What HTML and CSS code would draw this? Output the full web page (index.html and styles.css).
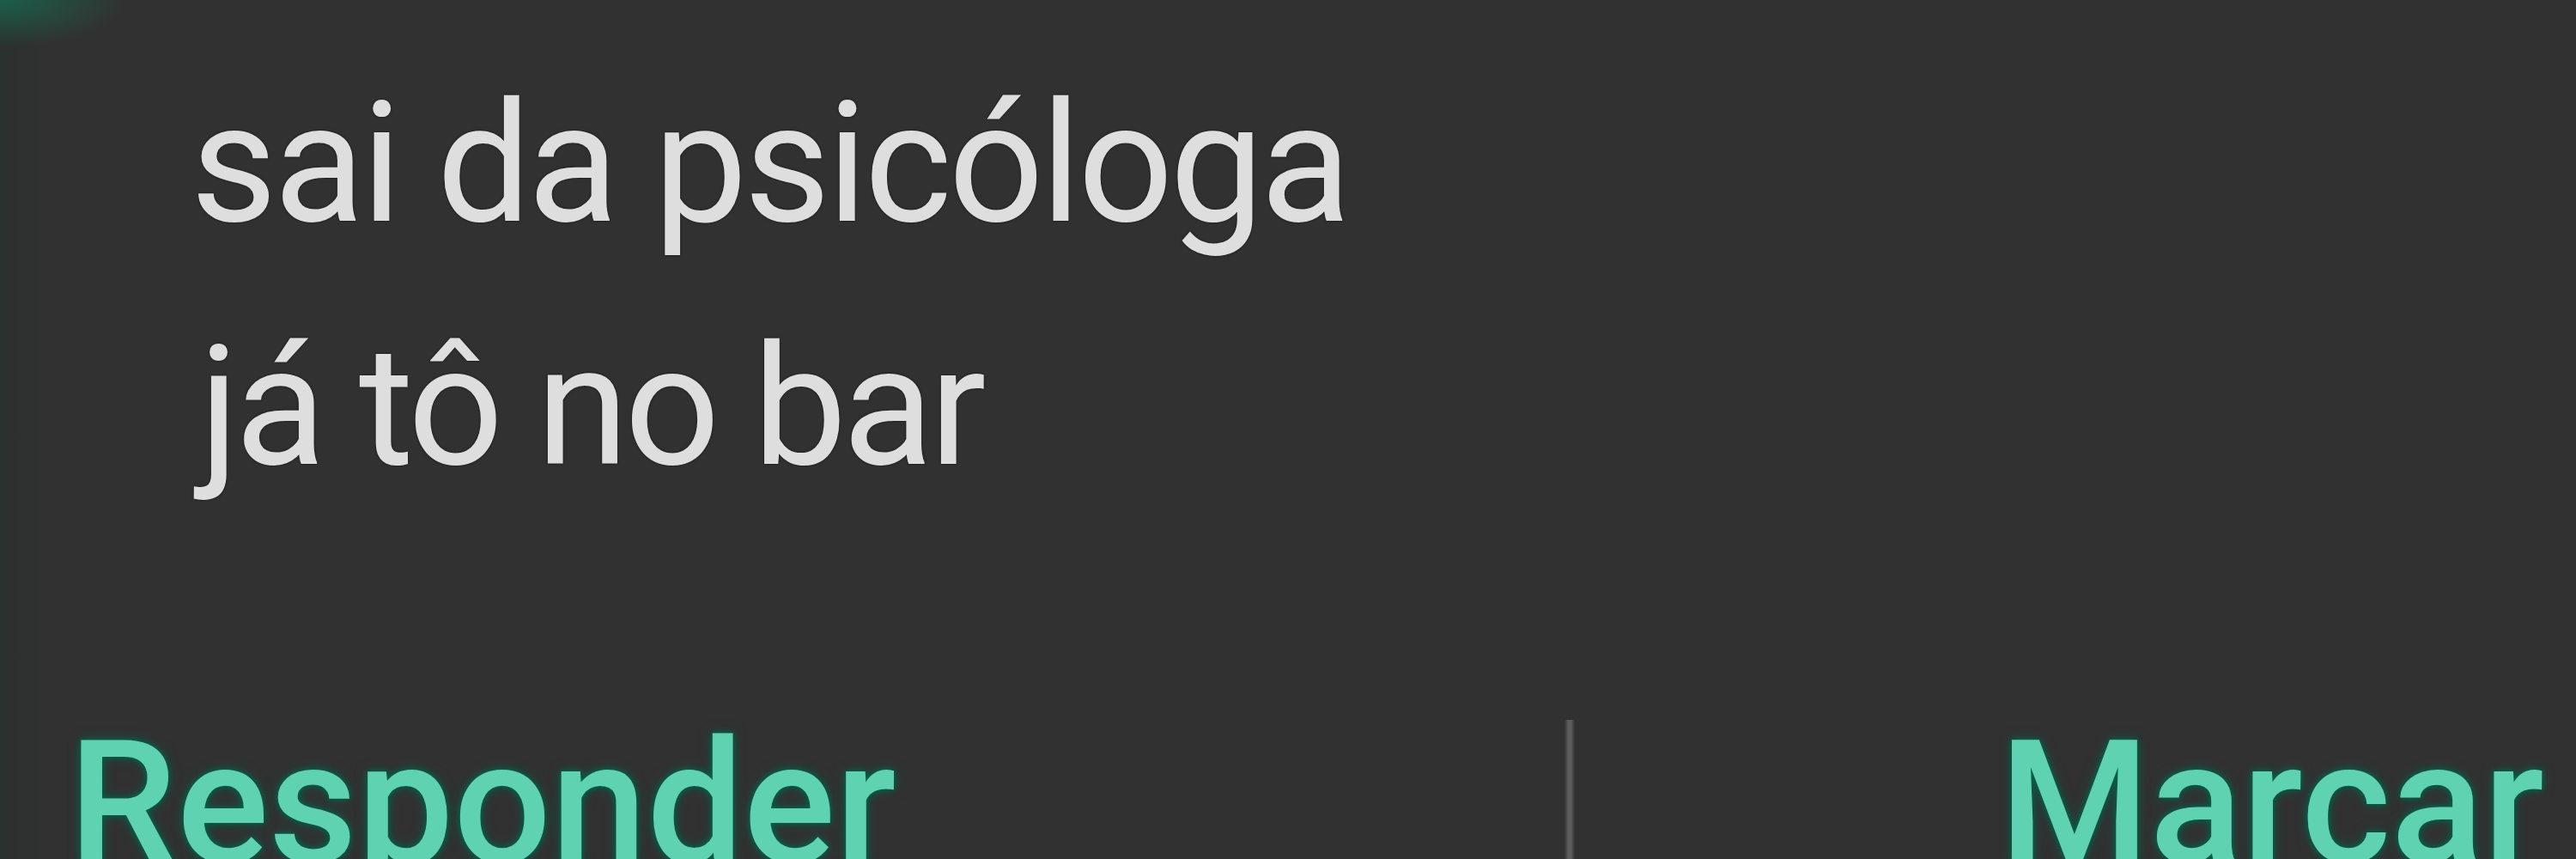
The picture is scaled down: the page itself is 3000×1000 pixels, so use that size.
FILE: index.html
```html
<!DOCTYPE html>
<html lang="pt-BR">
<head>
<meta charset="utf-8">
<title>Notificação</title>
<link rel="stylesheet" href="styles.css">
</head>
<body>
<div class="card">
  <div class="message">
    <p class="line">sai da psicóloga</p>
    <p class="line line-second">já tô no bar</p>
  </div>
  <div class="actions">
    <span class="action">Responder</span>
    <span class="divider"></span>
    <span class="action">Marcar</span>
  </div>
</div>
</body>
</html>
```

FILE: styles.css
```css
html, body {
  margin: 0;
  padding: 0;
  height: 1000px;
  overflow: hidden;
}
body {
  background-color: #313131;
  background-image:
    radial-gradient(ellipse 150px 55px at 0 0, rgba(22, 110, 82, 0.75), rgba(22, 110, 82, 0) 100%),
    linear-gradient(90deg, rgba(30, 48, 42, 0.35) 0, rgba(30, 48, 42, 0) 60px);
  font-family: Roboto, "Liberation Sans", Arial, sans-serif;
}
.card {
  display: flex;
  flex-direction: column;
}
.message {
  padding: 49px 0 0 222px;
}
.line {
  margin: 0;
  font-size: 195px;
  line-height: 283px;
  letter-spacing: -4px;
  color: #dedede;
  white-space: nowrap;
  text-shadow: 0 0 3px rgba(0, 0, 0, 0.6);
}
.line-second {
  padding-left: 10px;
  letter-spacing: -5px;
}
.actions {
  display: flex;
  align-items: flex-start;
  margin-top: 221px;
  padding: 0 37px 0 80px;
}
.action {
  font-size: 200px;
  font-weight: 500;
  line-height: 200px;
  color: #5fd2b2;
  white-space: nowrap;
  text-shadow: 0 0 6px #00684f, 0 0 14px rgba(0, 100, 76, 0.8);
}
.divider {
  width: 12px;
  height: 200px;
  margin: 2px 495px 0 auto;
  background: linear-gradient(90deg, rgba(90,90,90,0) 0, #5c5c5c 35%, #5c5c5c 65%, rgba(90,90,90,0) 100%);
}
```
